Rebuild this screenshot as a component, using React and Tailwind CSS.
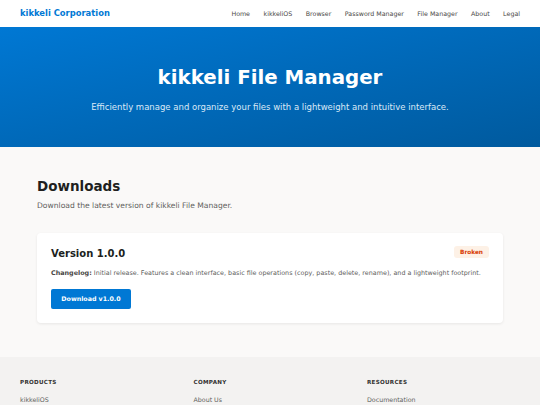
export default function App() {
  const links = ["Home", "kikkeliOS", "Browser", "Password Manager", "File Manager", "About", "Legal"];
  return (
    <div className="min-h-[405px] bg-[#faf9f8]" style={{ fontFamily: '"DejaVu Sans", Verdana, sans-serif' }}>
      <nav className="h-[27px] bg-white flex items-center justify-between px-[20px]">
        <span className="text-[8.4px] font-bold text-[#0078d4]">kikkeli Corporation</span>
        <div className="flex items-center gap-[13.5px]">
          {links.map((l) => (
            <span key={l} className="text-[6.3px] text-[#484644]">{l}</span>
          ))}
        </div>
      </nav>
      <header className="h-[120px] bg-gradient-to-br from-[#0078d4] to-[#005a9e] flex flex-col items-center pt-[39px]">
        <h1 className="text-[19.8px] leading-[24px] font-bold text-white">kikkeli File Manager</h1>
        <p className="mt-[12px] text-[8.5px] leading-[10px] text-[#dbe9f7]">
          Efficiently manage and organize your files with a lightweight and intuitive interface.
        </p>
      </header>
      <main className="px-[37px] pt-[30px] pb-[34px]">
        <h2 className="text-[13.5px] leading-[18px] font-bold text-[#201f1e]">Downloads</h2>
        <p className="mt-[6px] text-[7.6px] leading-[10px] text-[#605e5c]">Download the latest version of kikkeli File Manager.</p>
        <div className="mt-[22px] bg-white rounded-[4px] shadow-[0_1px_3px_rgba(0,0,0,0.08)] px-[14px] pt-[14px] pb-[14px]">
          <div className="flex items-start justify-between">
            <h3 className="text-[10px] leading-[14px] font-bold text-[#201f1e]">Version 1.0.0</h3>
            <span className="mt-[-1px] h-[12px] px-[6px] flex items-center rounded-[3px] bg-[#fdf1e6] text-[5.8px] font-bold text-[#d83b01]">Broken</span>
          </div>
          <p className="mt-[7px] text-[6.4px] leading-[10px] text-[#605e5c]">
            <span className="font-bold text-[#484644]">Changelog:</span> Initial release. Features a clean interface, basic file operations (copy, paste, delete, rename), and a lightweight footprint.
          </p>
          <button className="mt-[11px] h-[20px] w-[80px] flex items-center justify-center rounded-[2px] bg-[#0078d4] text-white text-[6.3px] font-bold">
            Download v1.0.0
          </button>
        </div>
      </main>
      <footer className="bg-[#f3f2f1] px-[20px] pt-[21px] pb-[10px]">
        <div className="grid grid-cols-3 gap-x-[20.5px]">
          {[
            ["PRODUCTS", "kikkeliOS"],
            ["COMPANY", "About Us"],
            ["RESOURCES", "Documentation"],
          ].map(([h, l]) => (
            <div key={h}>
              <div className="text-[5.6px] leading-[8px] font-bold tracking-[0.05em] text-[#323130]">{h}</div>
              <div className="mt-[9px] text-[6.3px] leading-[10px] text-[#605e5c]">{l}</div>
            </div>
          ))}
        </div>
      </footer>
    </div>
  );
}
